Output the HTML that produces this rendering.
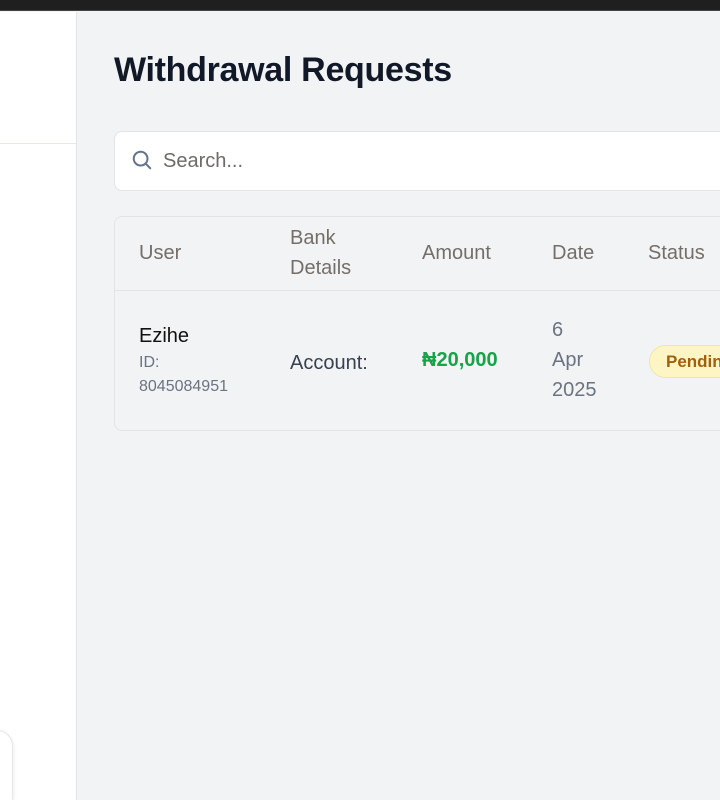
<!DOCTYPE html>
<html style="width:720px;height:800px;overflow:hidden"><head><meta charset="utf-8"><style>
*{margin:0;padding:0;box-sizing:border-box}
body{width:720px;height:800px;overflow:hidden;background:#f2f3f5;font-family:"Liberation Sans",Roboto,sans-serif;position:relative}
.top{position:absolute;left:0;top:0;width:720px;height:11px;background:#1f1f1f;border-bottom:1px solid #444}
.side{position:absolute;left:0;top:12px;width:77px;height:788px;background:#fff;border-right:1px solid #e3e4e7}
.sline{position:absolute;left:0;top:143px;width:76px;height:1px;background:#e5e7eb}
.sbox{position:absolute;left:-40px;top:730px;width:53px;height:70px;border:1px solid #e5e7eb;border-bottom:none;border-radius:16px 16px 0 0;background:#fff;box-shadow:0 1px 4px rgba(0,0,0,.1)}
h1{position:absolute;left:114px;top:51px;font-size:34px;font-weight:700;color:#111827;letter-spacing:-.3px}
.search{position:absolute;left:114px;top:131px;width:640px;height:60px;background:#fff;border:1px solid #e3e4e7;border-radius:8px}
.search svg{position:absolute;left:16px;top:17px}
.search span{position:absolute;left:48px;top:18px;font-size:20px;color:#6f6a66}
.card{position:absolute;left:114px;top:216px;width:640px;height:215px;border:1px solid #e3e4e7;border-radius:8px;background:#f2f3f5}
.hd{position:absolute;top:0;left:0;right:0;height:74px;border-bottom:1px solid #e3e4e7}
.t{position:absolute;font-size:20px;line-height:30px;color:#746e69}
.s{font-size:16px;line-height:24px;color:#6b7280}
.badge{position:absolute;left:534px;top:128px;width:120px;height:33px;background:#fdf6c4;border:1px solid #f0e6a8;border-radius:17px;font-size:17px;font-weight:700;color:#a0600d;padding:6px 0 0 16px}
</style></head><body>
<div class="top"></div>
<div class="side"></div>
<div class="sline"></div>
<div class="sbox"></div>
<h1>Withdrawal Requests</h1>
<div class="search"><svg width="22" height="22" viewBox="0 0 24 24" fill="none" stroke="#64748b" stroke-width="2.2" stroke-linecap="round"><circle cx="10.5" cy="10.5" r="7.5"/><path d="M16 16l5 5"/></svg><span>Search...</span></div>
<div class="card">
<div class="hd">
<div class="t" style="left:24px;top:21px">User</div>
<div class="t" style="left:175px;top:6px">Bank<br>Details</div>
<div class="t" style="left:307px;top:21px">Amount</div>
<div class="t" style="left:437px;top:21px">Date</div>
<div class="t" style="left:533px;top:21px">Status</div>
</div>
<div class="t" style="left:24px;top:104px;color:#111">Ezihe</div>
<div class="t s" style="left:24px;top:134px">ID:<br>8045084951</div>
<div class="t" style="left:175px;top:131px;color:#374151">Account:</div>
<div class="t" style="left:307px;top:128px;color:#16a34a;font-weight:700">₦20,000</div>
<div class="t" style="left:437px;top:98px;color:#6b7280">6<br>Apr<br>2025</div>
<div class="badge">Pending</div>
</div>
</body></html>
